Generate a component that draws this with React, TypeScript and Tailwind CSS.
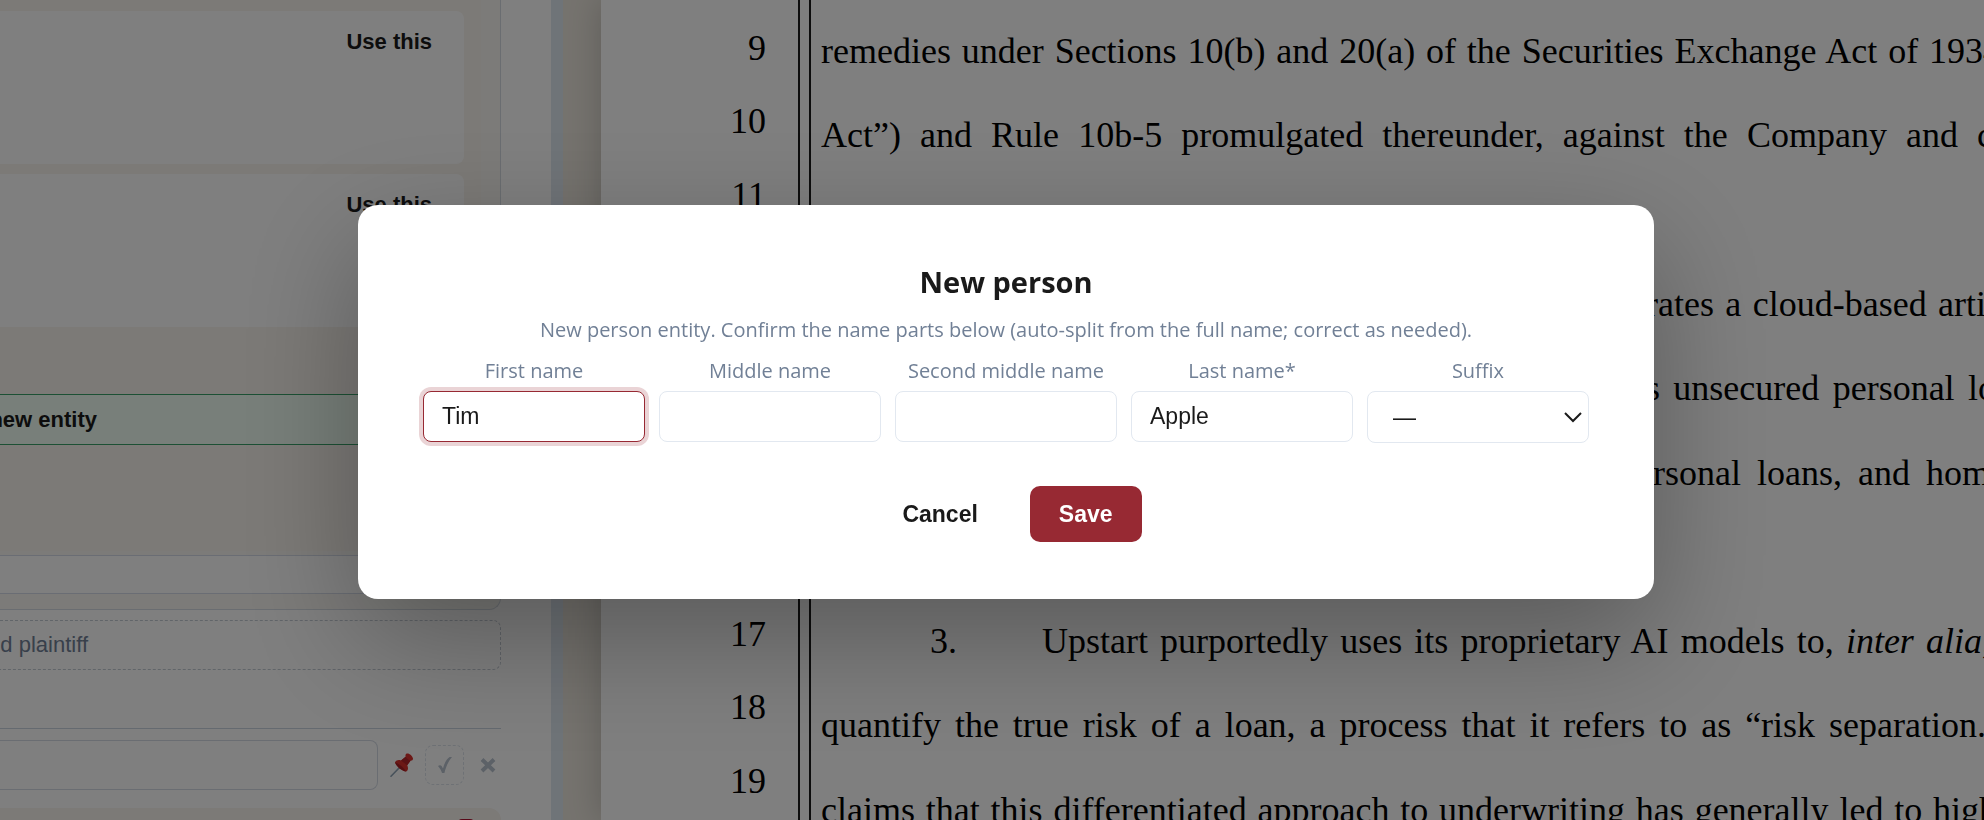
import { useState } from 'react';

interface DocLine {
  number?: string;
  indent: string;
  width: string;
  text: string;
  emphasis?: string;
}

const lineNumbers = ['9', '10', '11', '12', '13', '14', '15', '16', '17', '18', '19'];

// One entry per double-spaced row of the pleading, null for an empty row
const docLines: (DocLine | null)[] = [
  {
    indent: 'ml-0',
    width: 'w-[1180px]',
    text: 'remedies under Sections 10(b) and 20(a) of the Securities Exchange Act of 1934',
  },
  {
    indent: 'ml-0',
    width: 'w-[1254px]',
    text: 'Act”) and Rule 10b-5 promulgated thereunder, against the Company and certain',
  },
  null,
  { indent: 'ml-[773px]', width: 'w-[466px]', text: 'operates a cloud-based artificial' },
  { indent: 'ml-[719px]', width: 'w-[504px]', text: 'includes unsecured personal loans' },
  { indent: 'ml-[798px]', width: 'w-[387px]', text: 'personal loans, and home' },
  null,
  {
    number: '3.',
    indent: 'ml-[109px]',
    width: 'w-[949px]',
    text: 'Upstart purportedly uses its proprietary AI models to,',
    emphasis: 'inter alia,',
  },
  {
    indent: 'ml-0',
    width: 'w-[1181px]',
    text: 'quantify the true risk of a loan, a process that it refers to as “risk separation.”',
  },
  {
    indent: 'ml-0',
    width: 'w-[1204px]',
    text: 'claims that this differentiated approach to underwriting has generally led to higher',
  },
];

function PinIcon() {
  return (
    <svg viewBox="0 0 24 24" className="h-6 w-6" aria-hidden>
      <path d="M9.5 14.5 L1 23.2" stroke="#8fa3b5" strokeWidth="1.6" strokeLinecap="round" />
      <path
        d="M5 9.200c1.200-2 3.600-2.600 6-1.700l4.600-3.700c-.4-1.500.1-2.700 1.200-3.200 2.300-.6 5.800 2.300 6.200 5 .1 1.300-.9 2.200-2.500 2.100l-3.300 4.600c1.300 2.400 1 5-1 6.300-4-.6-9.800-4.800-11.200-9.400z"
        fill="#d8302c"
      />
      <path d="M5 9.200c3 1 8.400 4.600 11.200 9.400-4-.6-9.800-4.800-11.200-9.400z" fill="#a81f24" />
      <path d="M11 7.500l4.600-3.700c.8 1.400 2.900 3.200 4.900 3.900l-3.300 4.600z" fill="#b3242a" />
    </svg>
  );
}

function CheckIcon() {
  return (
    <svg viewBox="0 0 16 18" className="h-[18px] w-4" aria-hidden>
      <path
        d="M1 10c1.200-1 2.900-1 3.600 0l1.400 2.600C7.300 7.200 9.600 2.800 12.600 1L15 1C11.400 5 9 10.600 7.400 17L5 17C4.100 14.400 3 12.200 1 10z"
        fill="#b8c2ce"
      />
    </svg>
  );
}

function CrossIcon() {
  return (
    <svg viewBox="0 0 16 16" className="h-4 w-4" aria-hidden>
      <path d="M2 2.500L14 14M14 2.500L2 14" stroke="#b8c2ce" strokeWidth="4" />
    </svg>
  );
}

function CandidateCard() {
  return (
    <div className="flex h-[153px] items-start justify-end rounded-r-lg bg-white pt-[17px] pr-8">
      <button type="button" className="text-[22px] leading-7 font-bold text-[#1a1a1a]">
        Use this
      </button>
    </div>
  );
}

function SidePanel() {
  return (
    <aside className="w-[551px] shrink-0 bg-white pr-[50px]">
      <div className="overflow-hidden rounded-br-xl border-r border-b border-[#d5dbe2] bg-[#f8f7f3]">
        <div className="mr-[19px] bg-[#f8f4ee] pt-[11px] pr-[17px] pb-[106px]">
          <div className="flex flex-col gap-[10px]">
            <CandidateCard />
            <CandidateCard />
          </div>
          <button
            type="button"
            className="mt-[67px] flex h-[51px] w-full items-center border-y border-[#38a169] bg-[#f0fff4] text-[22px] leading-7 font-bold text-[#1a1a1a]"
          >
            <span className="flex w-[97px] justify-end whitespace-nowrap">Create new entity</span>
          </button>
        </div>
        <div className="mt-1 mb-[15px] h-[39px] border-y border-[#d5dbe8] bg-white" />
      </div>

      <button
        type="button"
        className="mt-[10px] flex h-[50px] w-full items-center rounded-r-lg border border-l-0 border-dashed border-[#c3cad3] text-[22px] leading-7 text-[#718096]"
      >
        <span className="flex w-[88px] justify-end whitespace-nowrap">Add plaintiff</span>
      </button>

      <div className="mt-[58px] flex items-center border-t border-[#cbd5e0] pt-[11px]">
        <input
          type="text"
          aria-label="Plaintiff name"
          className="h-[50px] w-[378px] rounded-r-lg border border-l-0 border-[#d5dbe4] bg-white px-4 text-[22px]"
        />
        <button type="button" aria-label="Pin" className="ml-3">
          <PinIcon />
        </button>
        <button
          type="button"
          aria-label="Confirm"
          className="ml-[11px] flex h-10 w-[39px] items-center justify-center rounded-lg border border-dashed border-[#dde3ea]"
        >
          <CheckIcon />
        </button>
        <button type="button" aria-label="Remove" className="ml-4">
          <CrossIcon />
        </button>
      </div>

      <div className="mt-[18px] flex h-16 justify-end rounded-tr-xl bg-[#f8f4ee] pt-[11px] pr-[27px]">
        <span className="h-4 w-4 rounded-sm bg-[#b01030]" />
      </div>
    </aside>
  );
}

function PleadingPage() {
  return (
    <div className="flex min-w-0 flex-1 overflow-hidden bg-[#ebe6dd] pl-[38px]">
      <div
        className="flex min-w-0 flex-1 bg-white text-[36px] text-black shadow-[0_0_32px_rgba(0,0,0,0.2)]"
        style={{ fontFamily: '"Liberation Serif", serif' }}
      >
        <ol className="mt-3 grid h-[806px] w-[197px] shrink-0 auto-rows-fr pr-8 text-right">
          {lineNumbers.map((n) => (
            <li key={n} className="leading-[73px]">
              {n}
            </li>
          ))}
        </ol>
        <div className="w-[13px] shrink-0 border-x-2 border-[#1a1a1a]" />
        <div className="mt-[9px] ml-[10px] grid h-[843px] min-w-0 flex-1 auto-rows-fr overflow-hidden">
          {docLines.map((line, i) =>
            line ? (
              <div key={i} className="flex leading-[84px]">
                <div className={`flex shrink-0 ${line.indent}`}>
                  {line.number && <span className="w-28">{line.number}</span>}
                  <p className={`shrink-0 [text-align-last:justify] ${line.width}`}>
                    {line.text}
                    {line.emphasis && <em> {line.emphasis}</em>}
                  </p>
                </div>
              </div>
            ) : (
              <div key={i} />
            ),
          )}
        </div>
      </div>
    </div>
  );
}

interface NameFieldProps {
  id: string;
  label: string;
  value: string;
  focused?: boolean;
  onChange: (value: string) => void;
}

function NameField({ id, label, value, focused, onChange }: NameFieldProps) {
  return (
    <div className="flex min-w-0 flex-col gap-[6px]">
      <label htmlFor={id} className="text-center text-[20px] leading-7 text-[#718096]">
        {label}
      </label>
      <input
        id={id}
        type="text"
        value={value}
        onChange={(e) => onChange(e.target.value)}
        className={`h-[51px] w-full rounded-lg border bg-white px-[18px] text-[23px] text-[#1a1a1a] outline-none ${
          focused ? 'border-[#972933] ring-4 ring-[#972933]/20' : 'border-[#e2e8f0]'
        }`}
        style={{ fontFamily: '"Liberation Sans", sans-serif' }}
      />
    </div>
  );
}

function NewPersonDialog() {
  const [first, setFirst] = useState('Tim');
  const [middle, setMiddle] = useState('');
  const [secondMiddle, setSecondMiddle] = useState('');
  const [last, setLast] = useState('Apple');
  const [suffix, setSuffix] = useState('');

  return (
    <div className="fixed inset-0 flex items-center justify-center bg-black/50 pb-4 pl-7">
      <form
        role="dialog"
        aria-labelledby="dialog-title"
        onSubmit={(e) => e.preventDefault()}
        className="w-full max-w-[1296px] rounded-[20px] bg-white px-[65px] py-[57px] shadow-[0_40px_120px_rgba(0,0,0,0.3)]"
        style={{ fontFamily: '"Open Sans", sans-serif' }}
      >
        <h2 id="dialog-title" className="text-center text-[29px] leading-10 font-bold text-[#1a1a1a]">
          New person
        </h2>
        <p className="mt-[14px] text-center text-[20px] leading-7 text-[#718096]">
          New person entity. Confirm the name parts below (auto-split from the full name; correct as needed).
        </p>

        <div className="mt-[13px] grid grid-cols-5 gap-[14px]">
          <NameField id="first" label="First name" value={first} focused onChange={setFirst} />
          <NameField id="middle" label="Middle name" value={middle} onChange={setMiddle} />
          <NameField
            id="second-middle"
            label="Second middle name"
            value={secondMiddle}
            onChange={setSecondMiddle}
          />
          <NameField id="last" label="Last name*" value={last} onChange={setLast} />
          <div className="flex min-w-0 flex-col gap-[6px]">
            <label htmlFor="suffix" className="text-center text-[20px] leading-7 text-[#718096]">
              Suffix
            </label>
            <div className="relative">
              <select
                id="suffix"
                value={suffix}
                onChange={(e) => setSuffix(e.target.value)}
                className="block h-[52px] w-full appearance-none rounded-lg border border-[#e2e8f0] bg-white pr-10 pl-[25px] text-[23px] text-[#1a1a1a] outline-none"
                style={{ fontFamily: '"Liberation Sans", sans-serif' }}
              >
                <option value="">—</option>
                <option value="Jr.">Jr.</option>
                <option value="Sr.">Sr.</option>
                <option value="III">III</option>
              </select>
              <svg
                viewBox="0 0 18 12"
                className="pointer-events-none absolute top-[21px] right-[7px] h-3 w-[18px]"
                fill="none"
                stroke="#1a1a1a"
                strokeWidth="2"
                aria-hidden
              >
                <path d="M1 1l8 8 8-8" />
              </svg>
            </div>
          </div>
        </div>

        <div
          className="mt-[43px] flex justify-center gap-5 text-[23px] leading-7 font-bold"
          style={{ fontFamily: '"Liberation Sans", sans-serif' }}
        >
          <button type="button" className="h-14 px-8 pb-px text-[#1a1a1a]">
            Cancel
          </button>
          <button type="submit" className="h-14 rounded-[10px] bg-[#972933] px-[29px] pb-px text-white">
            Save
          </button>
        </div>
      </form>
    </div>
  );
}

export default function App() {
  return (
    <div
      className="flex h-screen overflow-hidden bg-white"
      style={{ fontFamily: '"Liberation Sans", sans-serif' }}
    >
      <SidePanel />
      <div className="w-3 shrink-0 bg-[#dfe8f1]" />
      <PleadingPage />
      <NewPersonDialog />
    </div>
  );
}
